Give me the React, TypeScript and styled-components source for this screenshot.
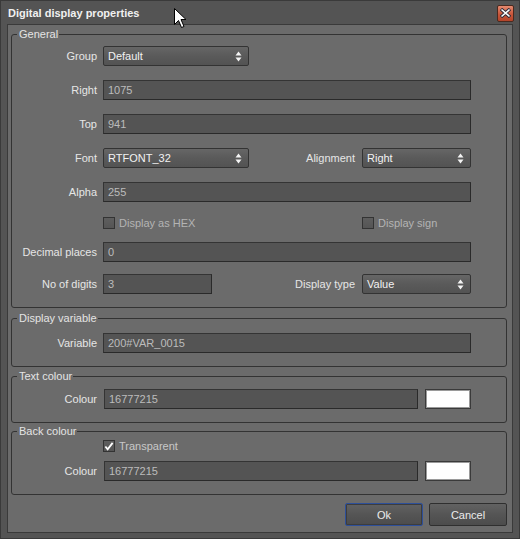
import React from "react";
import styled, { createGlobalStyle } from "styled-components";

const Global = createGlobalStyle`
  html, body { margin: 0; padding: 0; background: #555555; }
  body { font-family: "Liberation Sans", Arial, sans-serif; font-size: 11px; }
  * { box-sizing: border-box; }
`;

const Window = styled.div`
  position: relative;
  width: 520px;
  height: 539px;
  background: #545454;
  border: 1px solid #3a3a3a;
  display: flex;
  flex-direction: column;
`;

const TitleBar = styled.div`
  height: 23px;
  display: flex;
  align-items: center;
  justify-content: space-between;
  padding: 0 5px 0 7px;
`;

const Title = styled.div`
  font-weight: bold;
  font-size: 11px;
  color: #f0f0f0;
`;

const CloseBtn = styled.div`
  width: 17px;
  height: 17px;
  margin-top: 1px;
  border: 1px solid #4a2a20;
  border-radius: 2px;
  background: linear-gradient(#e48a70, #c8553a 55%, #b4442a);
  display: flex;
  align-items: center;
  justify-content: center;
`;

const Panel = styled.div`
  flex: 1;
  margin: 0 6px 5px 6px;
  background: #6b6b6b;
  border: 1px solid #3a3a3a;
  padding: 3px 5px 6px 3px;
  display: flex;
  flex-direction: column;
`;

const Group = styled.fieldset<{ $mt?: number; $pt: number }>`
  margin: ${(p) => p.$mt ?? 0}px 0 0 0;
  padding: ${(p) => p.$pt}px 0 13px 0;
  border: 1px solid #333333;
  border-radius: 3px;
  min-width: 0;
`;

const Legend = styled.legend`
  margin-left: 5px;
  padding: 0 1px 0 2px;
  line-height: 13px;
  font-size: 11px;
  color: #e4e4e4;
`;

const Row = styled.div<{ $mt?: number; $h?: number }>`
  display: grid;
  grid-template-columns: 85px 146px 101px 109px;
  column-gap: 6px;
  align-items: center;
  height: ${(p) => p.$h ?? 20}px;
  margin-top: ${(p) => p.$mt ?? 0}px;
`;

const Label = styled.div<{ $col?: number }>`
  grid-column: ${(p) => p.$col ?? 1};
  text-align: right;
  color: #e6e6e6;
  white-space: nowrap;
  padding-right: ${(p) => (p.$col === 3 ? 1 : 0)}px;
`;

const Input = styled.div<{ $span?: string; $w?: number }>`
  grid-column: ${(p) => p.$span ?? "2 / 5"};
  width: ${(p) => (p.$w ? `${p.$w}px` : "auto")};
  height: 20px;
  background: #545454;
  border: 1px solid #343434;
  border-right-color: #2a2a2a;
  border-bottom-color: #2a2a2a;
  color: #bcbcbc;
  padding: 0 4px;
  display: flex;
  align-items: center;
  white-space: nowrap;
`;

const Select = styled.div<{ $col: number }>`
  grid-column: ${(p) => p.$col};
  height: 20px;
  border: 1px solid #333333;
  border-radius: 2px;
  background: linear-gradient(#666666, #5a5a5a 50%, #535353);
  color: #f2f2f2;
  padding: 0 6px 0 4px;
  display: flex;
  align-items: center;
  justify-content: space-between;
`;

const Check = styled.label<{ $col: number; $disabled?: boolean }>`
  grid-column: ${(p) => p.$col} / span 2;
  display: flex;
  align-items: center;
  gap: 4px;
  color: ${(p) => (p.$disabled ? "#b4b4b4" : "#c8c8c8")};
  white-space: nowrap;
`;

const Box = styled.span`
  width: 12px;
  height: 12px;
  border: 1px solid #333333;
  background: linear-gradient(#5e5e5e, #555555);
  display: flex;
  align-items: center;
  justify-content: center;
`;

const ColourRow = styled.div<{ $mt?: number }>`
  display: grid;
  grid-template-columns: 85px 314px 46px;
  column-gap: 7px;
  align-items: center;
  height: 20px;
  margin-top: ${(p) => p.$mt ?? 0}px;
`;

const Swatch = styled.div`
  height: 20px;
  background: #ffffff;
  border: 1px solid #3a3a3a;
  box-shadow: inset 0 0 0 1px #9a9a9a;
`;

const Buttons = styled.div`
  display: flex;
  justify-content: flex-end;
  gap: 6px;
  margin-top: auto;
  padding-right: 0;
`;

const Button = styled.div<{ $focus?: boolean }>`
  width: 78px;
  height: 23px;
  border: 1px solid ${(p) => (p.$focus ? "#2d4f9a" : "#2f2f2f")};
  box-shadow: ${(p) => (p.$focus ? "inset 0 0 0 1px #3d3d3d" : "none")};
  border-radius: 2px;
  background: linear-gradient(#626262, #555555 50%, #4c4c4c);
  color: #ececec;
  display: flex;
  align-items: center;
  justify-content: center;
  font-size: 11px;
`;

const Cursor = styled.svg`
  position: absolute;
  left: 173px;
  top: 7px;
`;

const Arrows = () => (
  <svg width="7" height="11" viewBox="0 0 7 11">
    <path d="M0.5 4.5 L3.5 0.5 L6.5 4.5 Z" fill="#f4f4f4" />
    <path d="M0.5 6.5 L3.5 10.5 L6.5 6.5 Z" fill="#f4f4f4" />
  </svg>
);

const CheckMark = () => (
  <svg width="11" height="11" viewBox="0 0 11 11">
    <path d="M1.5 5.5 L4 8.5 L9.5 1.5" stroke="#ffffff" strokeWidth="2" fill="none" />
  </svg>
);

export default function App() {
  return (
    <>
      <Global />
      <Window>
        <TitleBar>
          <Title>Digital display properties</Title>
          <CloseBtn>
            <svg width="11" height="10" viewBox="0 0 11 10">
              <path d="M1 1 L10 9 M10 1 L1 9" stroke="#2a2a3a" strokeWidth="3.4" />
              <path d="M1.5 1.5 L9.5 8.5 M9.5 1.5 L1.5 8.5" stroke="#ffffff" strokeWidth="1.6" />
            </svg>
          </CloseBtn>
        </TitleBar>
        <Panel>
          <Group $pt={5}>
            <Legend>General</Legend>
            <Row>
              <Label>Group</Label>
              <Select $col={2}>
                <span>Default</span>
                <Arrows />
              </Select>
            </Row>
            <Row $mt={14}>
              <Label>Right</Label>
              <Input>1075</Input>
            </Row>
            <Row $mt={14}>
              <Label>Top</Label>
              <Input>941</Input>
            </Row>
            <Row $mt={14}>
              <Label>Font</Label>
              <Select $col={2}>
                <span>RTFONT_32</span>
                <Arrows />
              </Select>
              <Label $col={3}>Alignment</Label>
              <Select $col={4}>
                <span>Right</span>
                <Arrows />
              </Select>
            </Row>
            <Row $mt={14}>
              <Label>Alpha</Label>
              <Input>255</Input>
            </Row>
            <Row $mt={12} $h={18}>
              <Check $col={2} $disabled>
                <Box />
                Display as HEX
              </Check>
              <Check $col={4} $disabled>
                <Box />
                Display sign
              </Check>
            </Row>
            <Row $mt={10}>
              <Label>Decimal places</Label>
              <Input>0</Input>
            </Row>
            <Row $mt={12}>
              <Label>No of digits</Label>
              <Input $span="2" $w={109}>3</Input>
              <Label $col={3}>Display type</Label>
              <Select $col={4}>
                <span>Value</span>
                <Arrows />
              </Select>
            </Row>
          </Group>
          <Group $mt={4} $pt={8}>
            <Legend>Display variable</Legend>
            <Row>
              <Label>Variable</Label>
              <Input>200#VAR_0015</Input>
            </Row>
          </Group>
          <Group $mt={3} $pt={6}>
            <Legend>Text colour</Legend>
            <ColourRow>
              <Label>Colour</Label>
              <Input $span="2">16777215</Input>
              <Swatch />
            </ColourRow>
          </Group>
          <Group $mt={2} $pt={1}>
            <Legend>Back colour</Legend>
            <Row $h={14}>
              <Check $col={2}>
                <Box>
                  <CheckMark />
                </Box>
                Transparent
              </Check>
            </Row>
            <ColourRow $mt={8}>
              <Label>Colour</Label>
              <Input $span="2">16777215</Input>
              <Swatch />
            </ColourRow>
          </Group>
          <Buttons>
            <Button $focus>Ok</Button>
            <Button>Cancel</Button>
          </Buttons>
        </Panel>
        <Cursor width="13" height="21" viewBox="0 0 13 21">
          <path
            d="M0.5 0.5 L0.5 16.5 L4.5 12.5 L7.5 19.5 L10 18.5 L7 11.5 L12 11.5 Z"
            fill="#ffffff"
            stroke="#000000"
            strokeWidth="1"
          />
        </Cursor>
      </Window>
    </>
  );
}
